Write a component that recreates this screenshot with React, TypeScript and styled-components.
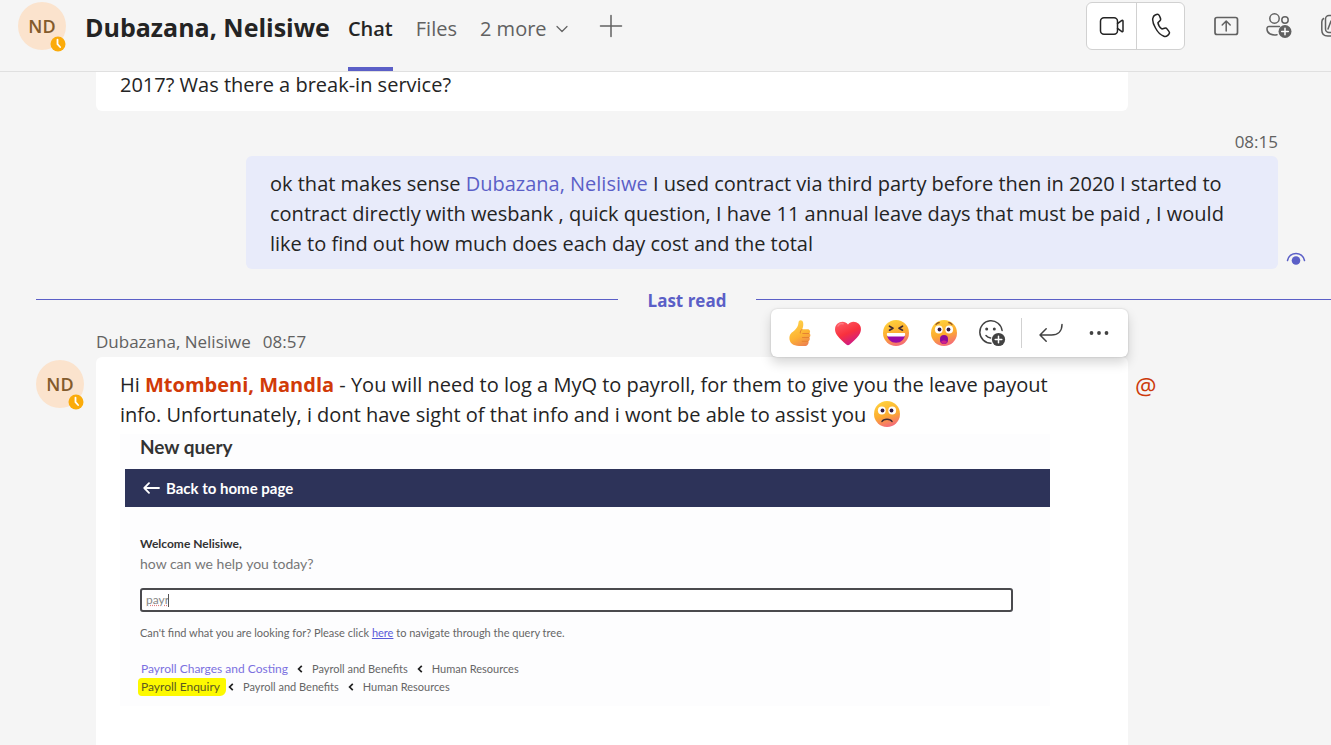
import React from 'react';
import styled, { createGlobalStyle } from 'styled-components';

const GlobalStyle = createGlobalStyle`
  *, *::before, *::after { box-sizing: border-box; }
  html, body { margin: 0; padding: 0; }
  body {
    background: #f5f5f5;
    color: #242424;
    font-family: "Open Sans", "Noto Sans", sans-serif;
    font-size: 20px;
    line-height: 30px;
  }
  button { font: inherit; color: inherit; background: none; border: 0; padding: 0; cursor: pointer; }
  svg { display: block; flex: none; }
`;

const accent = '#5b5fc7';

const Page = styled.div`
  display: flex;
  flex-direction: column;
  min-height: 100vh;
  overflow-x: hidden;
`;

const Header = styled.header`
  display: flex;
  align-items: flex-start;
  height: 72px;
  padding: 2px 0 0 18px;
  border-bottom: 1px solid #e0e0e0;
  white-space: nowrap;
  overflow: hidden;
`;

const AvatarCircle = styled.div`
  position: relative;
  flex: none;
  width: 48px;
  height: 48px;
  border-radius: 50%;
  background: #fbe3cd;
  color: #835b2c;
  font-size: 18px;
  font-weight: 600;
  line-height: 48px;
  text-align: center;
`;

const Status = styled.svg`
  position: absolute;
  right: 0;
  bottom: -2px;
`;

const ChatTitle = styled.h1`
  margin: 0 18px 0 19px;
  font-size: 25px;
  font-weight: 700;
  line-height: 50px;
`;

const Tabs = styled.nav`
  display: flex;
  gap: 23px;
  height: 69px;
`;

const Tab = styled.button<{ $active?: boolean }>`
  display: flex;
  align-items: flex-start;
  gap: 8px;
  padding-top: 12px;
  color: ${p => (p.$active ? '#242424' : '#616161')};
  font-weight: ${p => (p.$active ? 600 : 400)};
  border-bottom: 4px solid ${p => (p.$active ? accent : 'transparent')};
`;

const TabChevron = styled.svg`
  margin-top: 9px;
`;

const AddTab = styled.button`
  margin: 12px 0 0 30px;
  color: #616161;
`;

const Actions = styled.div`
  display: flex;
  align-items: center;
  gap: 24px;
  height: 48px;
  margin: 0 -14px 0 auto;
  color: #616161;
`;

const CallGroup = styled.div`
  display: flex;
  height: 48px;
  margin-right: 4px;
  background: #fff;
  border: 1px solid #d1d1d1;
  border-radius: 6px;
  color: #242424;
`;

const CallButton = styled.button`
  display: grid;
  place-items: center;
  width: 49px;
  & + & { width: 48px; border-left: 1px solid #d1d1d1; }
`;

const IconButton = styled.button`
  display: grid;
  place-items: center;
  width: 28px;
  height: 48px;
`;

const Messages = styled.main`
  flex: 1;
  display: flex;
  flex-direction: column;
`;

const Bubble = styled.div<{ $mine?: boolean }>`
  flex: 1;
  min-width: 0;
  padding: 13px 24px 10px;
  border-radius: ${p => (p.$mine ? '6px' : '6px 6px 0 0')};
  background: ${p => (p.$mine ? '#e8ebfa' : '#fff')};
`;

const EarlierMessage = styled.section`
  margin: 0 203px 0 96px;
  padding: 0 24px 13px;
  line-height: 26px;
  background: #fff;
  border-radius: 0 0 6px 6px;
`;

const SentTime = styled.time`
  margin: 19px 53px 0 0;
  font-size: 17px;
  line-height: 24px;
  color: #616161;
  text-align: right;
`;

const SentRow = styled.section`
  display: flex;
  align-items: flex-end;
  gap: 8px;
  margin: 2px 25px 0 246px;
`;

const Seen = styled.svg`
  margin-bottom: 2px;
`;

const Mention = styled.a`
  color: ${accent};
  text-decoration: none;
`;

const SelfMention = styled.strong`
  color: #d13a08;
  font-weight: 700;
`;

const LastRead = styled.div`
  display: flex;
  align-items: center;
  gap: 30px;
  margin: 20px 0 0 36px;
  color: ${accent};
  font-size: 17px;
  font-weight: 700;
  line-height: 24px;
  &::before, &::after { content: ""; height: 1px; margin-bottom: 3px; background: ${accent}; }
  &::before { flex: 583; }
  &::after { flex: 576; }
`;

const Sender = styled.div`
  display: flex;
  gap: 12px;
  margin: 17px 0 0 96px;
  color: #616161;
  font-size: 17px;
  line-height: 24px;
`;

const Received = styled.section`
  flex: 1;
  display: flex;
  gap: 12px;
  margin: 3px 0 0 36px;
`;

const AvatarSlot = styled.div`
  padding-top: 3px;
`;

const BubbleWrap = styled.div`
  position: relative;
  flex: 1;
  display: flex;
  min-width: 0;
`;

const Paragraph = styled.p`
  margin: 0;
`;

const InlineEmoji = styled.span`
  display: inline-block;
  vertical-align: -2px;
  height: 28px;
  margin: -4px 0 -4px 2px;
`;

const Gutter = styled.div`
  flex: none;
  width: 191px;
  padding-top: 14px;
  color: #cc3a0a;
  font-size: 24px;
`;

const MentionMark = styled.span`
  margin-left: -5px;
`;

const Reactions = styled.div`
  position: absolute;
  right: 0;
  bottom: 100%;
  display: flex;
  align-items: center;
  height: 48px;
  padding: 0 5px;
  background: #fff;
  border-radius: 6px;
  box-shadow: 0 0 2px rgba(0, 0, 0, 0.2), 0 6px 12px rgba(0, 0, 0, 0.16);
  color: #424242;
`;

const ReactionButton = styled.button`
  display: grid;
  place-items: center;
  width: 48px;
  height: 48px;
`;

const Divider = styled.span`
  width: 1px;
  height: 30px;
  margin: 0 5px;
  background: #d1d1d1;
`;

const QueryCard = styled.article`
  max-width: 930px;
  margin-top: 4px;
  padding: 1px 0 10px;
  background: #fdfdfe;
  color: #666;
  font-family: Lato, "Open Sans", sans-serif;
  font-size: 11px;
  line-height: 18px;
`;

const QueryTitle = styled.h2`
  margin: 0 20px 10px;
  color: #333;
  font-size: 19px;
  font-weight: 700;
  line-height: 24px;
`;

const BackBar = styled.a`
  display: flex;
  align-items: center;
  gap: 6px;
  height: 38px;
  margin-left: 5px;
  padding-left: 18px;
  background: #2d3359;
  color: #fff;
  font-size: 15px;
  font-weight: 700;
  text-decoration: none;
`;

const Welcome = styled.p`
  margin: 27px 20px 0;
  color: #333;
  font-size: 12px;
  font-weight: 700;
  line-height: 20px;
`;

const Question = styled.p`
  margin: 0 20px;
  color: #777;
  font-size: 14px;
  line-height: 20px;
`;

const SearchField = styled.label`
  display: flex;
  align-items: center;
  height: 24px;
  margin: 14px 37px 12px 20px;
  padding: 0 4px;
  border: 2px solid #4a4a4e;
  border-radius: 3px;
  background: #fff;
`;

const SearchInput = styled.input`
  width: 22px;
  height: 16px;
  padding: 0;
  border: 0;
  outline: 0;
  background: none;
  color: #888;
  font: inherit;
  font-size: 12px;
  text-decoration: underline dotted #e08080;
`;

const Caret = styled.span`
  width: 1px;
  height: 13px;
  background: #555;
`;

const Hint = styled.p`
  margin: 0 20px 18px;
  a { color: #5a5ad8; }
`;

const Crumbs = styled.div`
  display: flex;
  align-items: center;
  gap: 8px;
  margin-left: 21px;
  height: 18px;
`;

const CrumbLink = styled.a<{ $marked?: boolean }>`
  margin: ${p => (p.$marked ? '0 -7px 0 -3px' : '0')};
  padding: ${p => (p.$marked ? '0 6px 0 3px' : '0')};
  border-radius: 4px 2px 6px 4px;
  background: ${p => (p.$marked ? '#fdf900' : 'none')};
  color: ${p => (p.$marked ? '#5c5a20' : '#7b70e0')};
  font-size: 12px;
  text-decoration: none;
`;

const Clock = () => (
  <Status width="16" height="16" viewBox="0 0 16 16">
    <circle cx="8" cy="8" r="7.5" fill="#fbab0a" />
    <path d="M7.5 3.6v4.6l2.6 2.8" fill="none" stroke="#fff" strokeWidth="1.8" strokeLinecap="round" strokeLinejoin="round" />
  </Status>
);

const Avatar = () => (
  <AvatarCircle>
    ND
    <Clock />
  </AvatarCircle>
);

const line = { fill: 'none', stroke: 'currentColor', strokeWidth: 1.5, strokeLinecap: 'round', strokeLinejoin: 'round' } as const;

const VideoIcon = () => (
  <svg width="26" height="20" viewBox="0 0 26 20" {...line}>
    <rect x="1.5" y="1.8" width="17" height="16.4" rx="3.5" />
    <path d="M18.5 7.6l4.4-3.2c.5-.4 1.1 0 1.1.6v10c0 .6-.6 1-1.1.6l-4.4-3.2" />
  </svg>
);

const PhoneIcon = () => (
  <svg width="20" height="26" viewBox="0 0 20 26" {...line}>
    <path d="M4.2 2l1.3-.5c1.2-.4 2.4.2 2.9 1.3l1 2.3c.4 1 .2 2.1-.6 2.8L6.9 9.7c.3 2.2 2 4.9 4 6.3l2.6-.8c1-.3 2.100.1 2.700.9l1.700 2.300c.7.9.6 2.200-.2 3l-1 1c-1 .9-2.500 1.300-3.800.8-3.300-1.100-6.200-4-8.400-8.200C2.200 11 1.200 7.500 1.900 5c.3-1.400 1.100-2.500 2.300-3z" />
  </svg>
);

const ShareIcon = () => (
  <svg width="26" height="20" viewBox="0 0 26 20" {...line}>
    <rect x="1" y="1.500" width="22.5" height="17" rx="2" strokeWidth="1.7" />
    <path d="M12.2 15V5.200M8.200 9l4-4 4 4" />
  </svg>
);

const AddPeopleIcon = () => (
  <svg width="28" height="28" viewBox="0 0 28 28" {...line}>
    <circle cx="9.5" cy="6.5" r="4.7" />
    <circle cx="20" cy="8" r="3.2" />
    <path d="M12 22.700c-6 .9-10-1.500-10-5.700v-.5c0-1.200.9-2 2-2h10.500" />
    <circle cx="20" cy="19.5" r="6.5" fill="currentColor" stroke="none" />
    <path d="M20 16.200v6.600M16.700 19.500h6.600" stroke="#fff" />
  </svg>
);

const GalleryIcon = () => (
  <svg width="28" height="28" viewBox="-3 0 28 28" {...line}>
    <rect x="5.5" y="3.5" width="18" height="17" rx="3.5" />
    <path d="M3.500 6.500C2.200 7.300 1.800 8.500 1.800 10v8c0 4 2 6 6 6h10c1.500 0 2.700-.6 3.400-1.700" />
    <path d="M8 17l3-8 4 7" />
  </svg>
);

const AddReactionIcon = () => (
  <svg width="28" height="28" viewBox="0 0 28 28" {...line}>
    <path d="M13 24.200A11.200 11.200 0 1 1 24.100 11.500" />
    <path d="M8 16.500c1 1.300 2.600 2.200 4.600 2.400" />
    <circle cx="8.7" cy="10" r="1.5" fill="currentColor" stroke="none" />
    <circle cx="16.3" cy="10" r="1.5" fill="currentColor" stroke="none" />
    <circle cx="20.5" cy="20.5" r="6.6" fill="currentColor" stroke="none" />
    <path d="M20.500 17.200v6.600M17.200 20.500h6.600" stroke="#fff" />
  </svg>
);

const ReplyIcon = () => (
  <svg width="26" height="20" viewBox="0 0 26 20" {...line}>
    <path d="M24 1.500c0 6.500-4 10.500-10.500 10.500H2M8.200 5.700L2 12l6.200 6.300" />
  </svg>
);

const MoreIcon = () => (
  <svg width="20" height="6" viewBox="0 0 20 6" fill="currentColor">
    <circle cx="2.5" cy="3" r="1.9" />
    <circle cx="10" cy="3" r="1.9" />
    <circle cx="17.5" cy="3" r="1.9" />
  </svg>
);

const HiddenSvg = styled.svg`
  position: absolute;
`;

const EmojiDefs = () => (
  <HiddenSvg width="0" height="0" aria-hidden="true">
    <defs>
      <linearGradient id="face" x1="0.3" y1="0" x2="0.6" y2="1">
        <stop offset="0" stopColor="#ffd23c" />
        <stop offset="0.55" stopColor="#fcab30" />
        <stop offset="1" stopColor="#f4687c" />
      </linearGradient>
      <linearGradient id="heart" x1="0.2" y1="0" x2="0.7" y2="1">
        <stop offset="0" stopColor="#ff5a63" />
        <stop offset="0.5" stopColor="#f8313e" />
        <stop offset="1" stopColor="#c9198f" />
      </linearGradient>
      <linearGradient id="thumb" x1="0.3" y1="0" x2="0.7" y2="1">
        <stop offset="0" stopColor="#ffd34a" />
        <stop offset="0.6" stopColor="#fdb232" />
        <stop offset="1" stopColor="#ee8350" />
      </linearGradient>
    </defs>
  </HiddenSvg>
);

const ThumbEmoji = () => (
  <svg width="28" height="28" viewBox="0 0 28 28">
    <path d="M12.500 3.500c.2-2.800 4-3 4.600 0 .5 2.300 0 4.700-.9 6.800h5.300c2.600 0 3.300 2.700 1.900 4 1.400 1 1.300 3.200 0 4.100.9 1.200.4 3.100-.9 3.800.5 2.500-1 4.800-3.900 4.800h-5.600c-6 0-9.600-2.900-9.600-7.900 0-4.400 2.600-5.800 5-7.700 2.400-2 3.800-4.400 4.100-7.900z" fill="url(#thumb)" />
    <path d="M16.800 14.500h6M16.500 18.500h6.200M16.200 22.300h5.500M15.800 10.500c-1 .9-1.700 2-1.500 3.500" fill="none" stroke="#e58331" strokeWidth="1" strokeLinecap="round" />
  </svg>
);

const HeartEmoji = () => (
  <svg width="28" height="28" viewBox="0 0 28 28">
    <path d="M14 5.500C11.500 2 6.500 1.800 3.300 4.800.2 7.800.4 13 3.300 16.500c2.500 3.200 6 6.500 9 9 1 .9 2.400.9 3.400 0 3-2.500 6.500-5.800 9-9 2.900-3.500 3.100-8.700 0-11.700C21.500 1.800 16.500 2 14 5.500z" fill="url(#heart)" />
    <path d="M4 7c1-2 3-2.700 5-2.200" fill="none" stroke="#ff8a90" strokeWidth="1.5" strokeLinecap="round" opacity=".7" />
  </svg>
);

const LaughEmoji = () => (
  <svg width="28" height="28" viewBox="0 0 28 28">
    <circle cx="14" cy="14" r="13" fill="url(#face)" />
    <path d="M7.500 7.200l3.500 2-3.500 2M20.500 7.200l-3.500 2 3.500 2" fill="none" stroke="#402a32" strokeWidth="1.7" strokeLinecap="round" strokeLinejoin="round" />
    <path d="M5 15h18c0 5-3.800 8.800-9 8.800S5 20 5 15z" fill="#9a0ba6" />
    <path d="M5.500 14h17c.8 0 .8 1.500.4 2.500-.2.700-.6 1-1.200 1H6.300c-.6 0-1-.3-1.200-1-.4-1-.4-2.500.4-2.500z" fill="#fff" />
  </svg>
);

const Eyes = () => (
  <>
    <circle cx="8.8" cy="10.5" r="3.9" fill="#fff" />
    <circle cx="19.2" cy="10.5" r="3.9" fill="#fff" />
    <circle cx="9.5" cy="10.5" r="1.9" fill="#321b41" />
    <circle cx="18.5" cy="10.5" r="1.9" fill="#321b41" />
  </>
);

const SurprisedEmoji = () => (
  <svg width="28" height="28" viewBox="0 0 28 28">
    <circle cx="14" cy="14" r="13" fill="url(#face)" />
    <Eyes />
    <path d="M6 5.500c.8-1 2-1.700 3.200-1.800M22 5.500c-.8-1-2-1.700-3.200-1.800" fill="none" stroke="#8a4a20" strokeWidth="1.2" strokeLinecap="round" />
    <rect x="10" y="16" width="8" height="9" rx="4" fill="#8b0a9a" />
    <path d="M11 23c1-2 5-2 6 0-1.200 2.400-4.800 2.400-6 0z" fill="#d0208a" />
  </svg>
);

const SadEmoji = () => (
  <svg width="28" height="28" viewBox="0 0 28 28">
    <circle cx="14" cy="14" r="13" fill="url(#face)" />
    <Eyes />
    <path d="M9 21.500c1.500-3 8.500-3 10 0" fill="none" stroke="#402a32" strokeWidth="1.5" strokeLinecap="round" />
  </svg>
);

const CrumbArrow = () => (
  <svg width="8" height="8" viewBox="0 0 8 8">
    <path d="M5.800 0.800L2.600 4l3.200 3.200" fill="none" stroke="#222" strokeWidth="1.7" />
  </svg>
);

const reactions = [
  { label: 'Like', icon: <ThumbEmoji /> },
  { label: 'Heart', icon: <HeartEmoji /> },
  { label: 'Laugh', icon: <LaughEmoji /> },
  { label: 'Surprised', icon: <SurprisedEmoji /> },
  { label: 'More reactions', icon: <AddReactionIcon /> },
];

const results = [
  { name: 'Payroll Charges and Costing', marked: false },
  { name: 'Payroll Enquiry', marked: true },
];

const EmbeddedQuery = () => (
  <QueryCard>
    <QueryTitle>New query</QueryTitle>
    <BackBar href="#home">
      <svg width="17" height="12" viewBox="0 0 17 12" fill="none" stroke="#fff" strokeWidth="1.8" strokeLinecap="round" strokeLinejoin="round">
        <path d="M16 6H1.500M6 1.200L1.300 6 6 10.800" />
      </svg>
      Back to home page
    </BackBar>
    <Welcome>Welcome Nelisiwe,</Welcome>
    <Question>how can we help you today?</Question>
    <SearchField>
      <SearchInput aria-label="Search queries" defaultValue="payr" spellCheck={false} />
      <Caret />
    </SearchField>
    <Hint>
      Can't find what you are looking for? Please click <a href="#tree">here</a> to navigate through the query tree.
    </Hint>
    {results.map(r => (
      <Crumbs key={r.name}>
        <CrumbLink href="#result" $marked={r.marked}>{r.name}</CrumbLink>
        <CrumbArrow />
        <span>Payroll and Benefits</span>
        <CrumbArrow />
        <span>Human Resources</span>
      </Crumbs>
    ))}
  </QueryCard>
);

export default function App() {
  return (
    <Page>
      <GlobalStyle />
      <EmojiDefs />
      <Header>
        <Avatar />
        <ChatTitle>Dubazana, Nelisiwe</ChatTitle>
        <Tabs>
          <Tab $active>Chat</Tab>
          <Tab>Files</Tab>
          <Tab>
            2 more
            <TabChevron width="14" height="12" viewBox="0 0 14 12" {...line} strokeWidth={1.2}>
              <path d="M2 3.500l5 5 5-5" />
            </TabChevron>
          </Tab>
        </Tabs>
        <AddTab aria-label="Add a tab">
          <svg width="24" height="24" viewBox="0 0 24 24" {...line}>
            <path d="M12 1.500v21M1.500 12h21" />
          </svg>
        </AddTab>
        <Actions>
          <CallGroup>
            <CallButton aria-label="Video call"><VideoIcon /></CallButton>
            <CallButton aria-label="Audio call"><PhoneIcon /></CallButton>
          </CallGroup>
          <IconButton aria-label="Share screen"><ShareIcon /></IconButton>
          <IconButton aria-label="Add people"><AddPeopleIcon /></IconButton>
          <IconButton aria-label="Gallery"><GalleryIcon /></IconButton>
        </Actions>
      </Header>
      <Messages>
        <EarlierMessage>2017? Was there a break-in service?</EarlierMessage>
        <SentTime>08:15</SentTime>
        <SentRow>
          <Bubble $mine>
            ok that makes sense <Mention href="#profile">Dubazana, Nelisiwe</Mention> I used contract via third party before then in 2020 I started to
            <br />
            contract directly with wesbank , quick question, I have 11 annual leave days that must be paid , I would
            <br />
            like to find out how much does each day cost and the total
          </Bubble>
          <Seen width="20" height="16" viewBox="0 0 20 16">
            <path d="M1.500 9.500C3.500 0 16.500 0 18.500 9.500" fill="none" stroke={accent} strokeWidth="1.5" strokeLinecap="round" />
            <circle cx="10" cy="9.5" r="4.3" fill={accent} />
          </Seen>
        </SentRow>
        <LastRead>Last read</LastRead>
        <Sender>
          <span>Dubazana, Nelisiwe</span>
          <time>08:57</time>
        </Sender>
        <Received>
          <AvatarSlot><Avatar /></AvatarSlot>
          <BubbleWrap>
            <Bubble>
              <Paragraph>
                Hi <SelfMention>Mtombeni, Mandla</SelfMention> - You will need to log a MyQ to payroll, for them to give you the leave payout
                <br />
                info. Unfortunately, i dont have sight of that info and i wont be able to assist you <InlineEmoji><SadEmoji /></InlineEmoji>
              </Paragraph>
              <EmbeddedQuery />
            </Bubble>
            <Reactions>
              {reactions.map(r => (
                <ReactionButton key={r.label} aria-label={r.label}>{r.icon}</ReactionButton>
              ))}
              <Divider />
              <ReactionButton aria-label="Reply"><ReplyIcon /></ReactionButton>
              <ReactionButton aria-label="More options"><MoreIcon /></ReactionButton>
            </Reactions>
          </BubbleWrap>
          <Gutter><MentionMark>@</MentionMark></Gutter>
        </Received>
      </Messages>
    </Page>
  );
}
